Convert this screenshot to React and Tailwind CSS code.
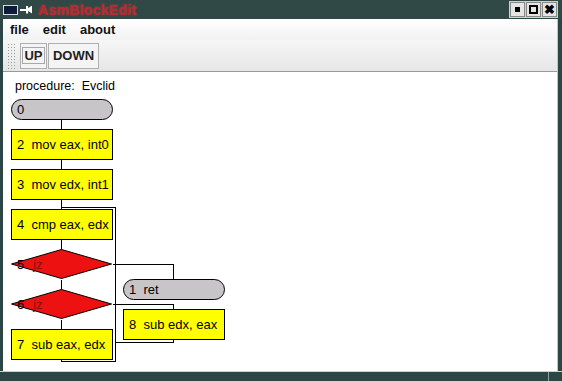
import React from 'react';

const OX = 3;
const OY = 73;

// page coordinates, shifted into the canvas at render
const nodes = [
  { kind: 'pill', x: 11, y: 100, w: 101, h: 20, text: '0' },
  { kind: 'box', x: 11, y: 130, w: 101, h: 30, text: '2  mov eax, int0' },
  { kind: 'box', x: 11, y: 170, w: 101, h: 30, text: '3  mov edx, int1' },
  { kind: 'box', x: 11, y: 210, w: 101, h: 30, text: '4  cmp eax, edx' },
  { kind: 'box', x: 11, y: 330, w: 101, h: 30, text: '7  sub eax, edx' },
  { kind: 'pill', x: 123, y: 280, w: 101, h: 20, text: '1  ret' },
  { kind: 'box', x: 123, y: 310, w: 101, h: 30, text: '8  sub edx, eax' },
];

const diamonds = [
  { y: 250, num: '5' },
  { y: 290, num: '6' },
];

const lines = [
  [[61, 120], [61, 130]],
  [[61, 160], [61, 170]],
  [[61, 200], [61, 210]],
  [[61, 208], [115, 208], [115, 362], [61, 362], [61, 360]],
  [[61, 240], [61, 250]],
  [[61, 280], [61, 290]],
  [[61, 320], [61, 330]],
  [[112, 265], [173, 265], [173, 280]],
  [[112, 305], [173, 305], [173, 310]],
  [[173, 340], [173, 343], [115, 343]],
];

function Diagram() {
  return (
    <div className="relative flex-1 bg-white overflow-hidden font-['Liberation_Sans',Arial,sans-serif] text-[13px] text-black">
      <div className="absolute left-[12px] top-[8px] leading-none text-[12.5px] whitespace-pre">procedure:  Evclid</div>

      <svg className="absolute left-0 top-0" width="555" height="300">
        <g transform={`translate(${-OX} ${-OY})`} shapeRendering="crispEdges">
          {lines.map((pts, i) => (
            <polyline
              key={i}
              points={pts.map((p) => `${p[0] + 0.5},${p[1] + 0.5}`).join(' ')}
              fill="none"
              stroke="#000"
              strokeWidth="1"
            />
          ))}
        </g>
        <g transform={`translate(${-OX} ${-OY})`}>
          {diamonds.map((d) => (
            <polygon
              key={d.num}
              points={`11.5,${d.y + 15} 61.5,${d.y + 0.5} 111.5,${d.y + 15} 61.5,${d.y + 29.5}`}
              fill="#ee1111"
              stroke="#000"
              strokeWidth="1"
            />
          ))}
        </g>
      </svg>

      {diamonds.map((d) => (
        <div
          key={d.num}
          className="absolute flex items-center gap-[9px] leading-none"
          style={{ left: 17 - OX, top: d.y + 9 - OY }}
        >
          <span>{d.num}</span>
          <span className="text-[#8a1010]">jz</span>
        </div>
      ))}

      {nodes.map((n) => (
        <div
          key={n.text}
          className={
            'absolute flex items-center border border-black leading-none whitespace-pre ' +
            (n.kind === 'pill' ? 'bg-[#c8c5c8] rounded-full pl-[5px]' : 'bg-[#ffff00] pl-[5px]')
          }
          style={{ left: n.x - OX, top: n.y - OY, width: n.w + 1, height: n.h + 1 }}
        >
          {n.text}
        </div>
      ))}
    </div>
  );
}

function WinButton({ children }) {
  return (
    <div className="w-[15px] h-[15px] bg-[#e4e4e4] border border-[#888] flex items-center justify-center">
      {children}
    </div>
  );
}

export default function App() {
  return (
    <div className="w-[562px] h-[381px] bg-[#2c4646] flex flex-col overflow-hidden font-['Liberation_Sans',Arial,sans-serif]">
      {/* title bar */}
      <div className="h-[19px] flex items-center bg-[#45363f] bg-[radial-gradient(#2e4a48_0.7px,transparent_0.8px)] bg-[length:2px_2px]">
        <div className="ml-[3px] w-[15px] h-[10px] bg-[#0e1a3a] border border-[#d8d8e8]" />
        <div className="ml-[2px] flex items-center">
          <div className="w-[6px] h-[2px] bg-white" />
          <div className="w-[6px] h-[8px] bg-white [clip-path:polygon(0_0,35%_0,35%_35%,100%_0,100%_100%,35%_65%,35%_100%,0_100%)]" />
        </div>
        <div className="ml-[6px] text-[14px] font-bold text-[#b82a30] leading-none tracking-[0.3px] [text-shadow:0_0_2px_#c03a40]">
          AsmBlockEdit
        </div>
        <div className="ml-auto mr-[4px] flex gap-[1px] bg-[#d0d0d0] p-[1px]">
          <WinButton>
            <div className="w-[5px] h-[5px] bg-black" />
          </WinButton>
          <WinButton>
            <div className="w-[9px] h-[9px] border-[2px] border-black" />
          </WinButton>
          <WinButton>
            <span className="text-[13px] font-bold leading-none text-black">✖</span>
          </WinButton>
        </div>
      </div>

      {/* window body */}
      <div className="flex-1 flex ml-[3px] mr-[4px] border-r border-[#bcc8c8]">
        <div className="flex-1 flex flex-col bg-white">
          <div className="h-[21px] flex items-center gap-[14px] pl-[7px] text-[13px] font-bold text-[#111] bg-[linear-gradient(#ffffff,#f2f2f2)]">
            <span>file</span>
            <span>edit</span>
            <span>about</span>
          </div>
          <div className="h-[32px] flex items-center pl-[4px] border-b border-[#9a9a9a] bg-[linear-gradient(#f6f6f6,#e6e6e6)]">
            <div className="w-[9px] h-[26px] bg-[radial-gradient(#9a9a9a_0.6px,transparent_0.8px)] bg-[length:3px_3px]" />
            <div className="ml-[4px] w-[27px] h-[26px] border border-[#b0b0b0] flex items-center justify-center bg-[#f4f4f4]">
              <div className="px-[1px] border border-[#a8a8a8] text-[13px] font-bold leading-[15px] text-[#222]">UP</div>
            </div>
            <div className="ml-[1px] w-[51px] h-[26px] border border-[#b0b0b0] flex items-center justify-center text-[13px] font-bold text-[#222] bg-[#f4f4f4]">
              DOWN
            </div>
          </div>
          <Diagram />
        </div>
      </div>

      {/* bottom frame */}
      <div className="h-[10px] border-t border-[#c8d0d0] flex">
        <div className="flex-1" />
        <div className="w-[14px] border-l border-[#8aa0a0]" />
      </div>
    </div>
  );
}
